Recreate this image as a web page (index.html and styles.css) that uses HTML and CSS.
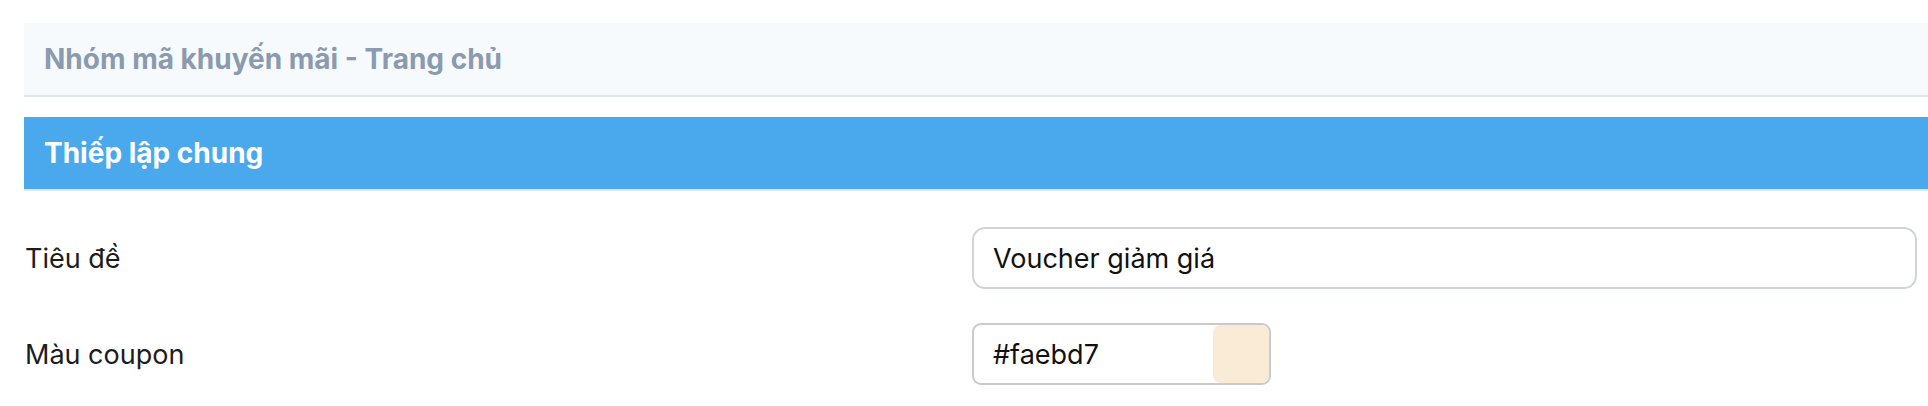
FILE: index.html
```html
<!DOCTYPE html>
<html lang="vi">
<head>
<meta charset="utf-8">
<title>Nhóm mã khuyến mãi - Trang chủ</title>
<link rel="stylesheet" href="styles.css">
</head>
<body>
<div class="page">
  <div class="page-header">Nhóm mã khuyến mãi - Trang chủ</div>
  <div class="section-bar">Thiếp lập chung</div>
  <form class="form">
    <div class="form-row">
      <label class="form-label" for="title">Tiêu đề</label>
      <input class="text-input" id="title" type="text" value="Voucher giảm giá">
    </div>
    <div class="form-row">
      <label class="form-label" for="color">Màu coupon</label>
      <div class="color-input">
        <span class="color-value" id="color">#faebd7</span>
        <span class="color-swatch"></span>
      </div>
    </div>
  </form>
</div>
</body>
</html>
```

FILE: styles.css
```css
* { box-sizing: border-box; }

html, body {
  margin: 0;
  padding: 0;
  background: #ffffff;
}

body {
  font-family: "Inter", "Noto Sans", sans-serif;
  overflow: hidden;
}

.page {
  margin-left: 24px;
  padding-top: 23px;
}

.page-header {
  height: 74px;
  display: flex;
  align-items: center;
  padding: 0 20px;
  background: #f7fafc;
  border-bottom: 2px solid #dfe5ec;
  color: #8a9bb0;
  font-size: 28px;
  font-weight: 700;
}

.section-bar {
  margin-top: 20px;
  height: 74px;
  display: flex;
  align-items: center;
  padding: 0 20px;
  background: #4aa9ec;
  border-bottom: 2px solid #e1e6ec;
  color: #ffffff;
  font-size: 28px;
  font-weight: 700;
}

.form {
  padding: 36px 11px 0 0;
  display: flex;
  flex-direction: column;
  gap: 34px;
}

.form-row {
  display: grid;
  grid-template-columns: 948px 1fr;
  align-items: center;
}

.form-label {
  font-size: 27px;
  color: #1c1c1e;
  padding-left: 1px;
}

.text-input {
  height: 62px;
  width: 100%;
  border: 2px solid #d0d4d9;
  border-radius: 13px;
  padding: 0 19px;
  font-family: inherit;
  font-size: 27px;
  color: #111111;
  background: #ffffff;
  outline: none;
}

.color-input {
  width: 299px;
  height: 62px;
  border: 2px solid #c9cacc;
  border-radius: 9px;
  display: flex;
  align-items: stretch;
  justify-content: space-between;
  padding-left: 19px;
  background: #ffffff;
}

.color-value {
  display: flex;
  align-items: center;
  font-size: 27px;
  color: #111111;
}

.color-swatch {
  width: 56px;
  background: #faebd7;
  border-radius: 8px;
}
```
